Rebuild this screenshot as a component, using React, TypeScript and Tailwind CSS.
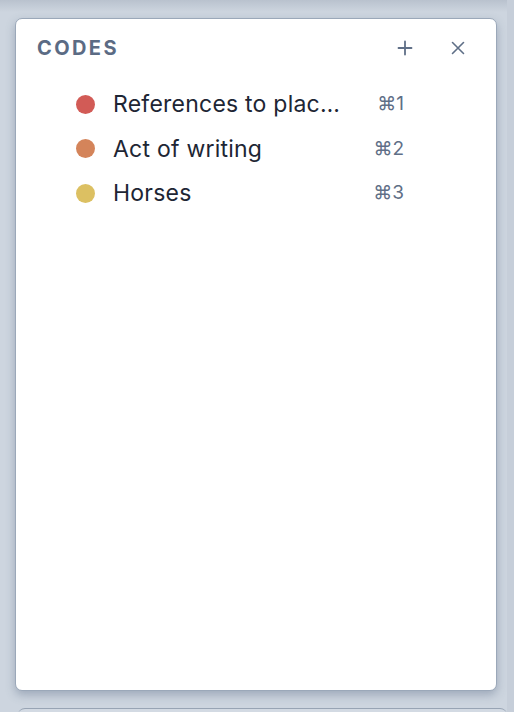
import React from "react";

const codes = [
  { name: "References to places in the text", color: "bg-[#d25b56]", key: "⌘1" },
  { name: "Act of writing", color: "bg-[#d4845a]", key: "⌘2" },
  { name: "Horses", color: "bg-[#dcc062]", key: "⌘3" },
];

const App = () => {
  return (
    <div className="flex h-[712px] w-full overflow-hidden bg-[#cdd5df] font-['Inter','Noto_Sans',sans-serif]">
      <div className="flex flex-1 flex-col">
        {/* edge of the panel above */}
        <div className="h-[12px] shrink-0 bg-linear-to-b from-[#b9c2ce] to-[#cdd5df]" />

        {/* Codes panel */}
        <div className="ml-[15px] mt-[6px] flex h-[673px] w-[482px] shrink-0 flex-col rounded-[7px] border border-[#9ba8b9] bg-white shadow-[0_4px_10px_rgba(100,116,139,0.45)]">
          <div className="flex h-[58px] items-center pl-[21px] pr-[31px]">
            <h2 className="text-[20px] font-bold uppercase tracking-[0.12em] text-[#5b6b84]">
              Codes
            </h2>
            <div className="ml-auto flex items-center gap-[38px] text-[#5f6f87]">
              <svg width="16" height="16" viewBox="0 0 16 16" fill="none" stroke="currentColor" strokeWidth="1.8" strokeLinecap="round">
                <path d="M8 1.5v13M1.5 8h13" />
              </svg>
              <svg width="14" height="14" viewBox="0 0 14 14" fill="none" stroke="currentColor" strokeWidth="1.6" strokeLinecap="round">
                <path d="M1.5 1.5l11 11M12.5 1.5l-11 11" />
              </svg>
            </div>
          </div>

          <ul className="pt-[5px]">
            {codes.map((code) => (
              <li key={code.key} className="flex h-[44.5px] items-center pl-[60px] pr-[92px]">
                <span className={`h-[19px] w-[19px] shrink-0 rounded-full ${code.color}`} />
                <span className="ml-[18px] w-[232px] truncate text-[23px] tracking-[0.01em] text-[#1e2634]">
                  {code.name}
                </span>
                <span className="ml-auto text-[19px] text-[#5f6f87]">{code.key}</span>
              </li>
            ))}
          </ul>
        </div>

        {/* top of the next panel */}
        <div className="ml-[18px] mt-[17px] h-[20px] shrink-0 rounded-t-[7px] border-t border-[#98a4b4] bg-[#d3dae3]" />
      </div>
      <div className="w-[7px] shrink-0 bg-[#c6ced9]" />
    </div>
  );
};

export default App;
